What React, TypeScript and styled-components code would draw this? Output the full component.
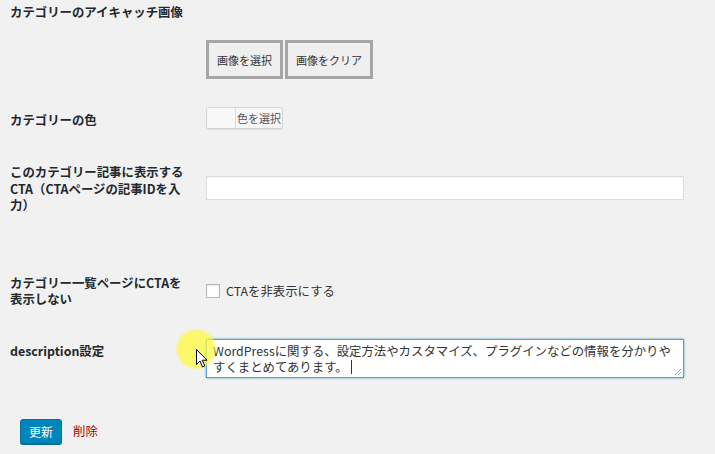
import styled, { createGlobalStyle } from 'styled-components';

const GlobalStyle = createGlobalStyle`
  html, body {
    margin: 0;
    padding: 0;
    background: #f1f1f1;
  }
  body {
    font-family: "Noto Sans CJK JP", "Noto Sans", sans-serif;
    font-size: 12.4px;
    color: #23282d;
  }
`;

const Page = styled.div`
  position: relative;
  width: 715px;
  height: 454px;
  overflow: hidden;
  padding-left: 10px;
  box-sizing: border-box;
`;

const Row = styled.div`
  display: flex;
  align-items: flex-start;
`;

const Label = styled.div<{ $top: number }>`
  width: 196px;
  flex-shrink: 0;
  padding-top: ${(p) => p.$top}px;
  font-weight: 700;
  line-height: 16.5px;
  box-sizing: border-box;
  padding-right: 14px;
`;

const Field = styled.div<{ $top: number }>`
  flex: 1;
  padding-top: ${(p) => p.$top}px;
  display: flex;
  align-items: center;
  gap: 2px;
`;

const MediaButton = styled.button`
  height: 39px;
  padding: 0 8px;
  background: #efefef;
  border: 3px solid #a6a6a6;
  font-family: inherit;
  font-size: 11px;
  color: #333;
  cursor: pointer;
`;

const ColorPicker = styled.button`
  display: flex;
  align-items: stretch;
  width: 77px;
  height: 22px;
  padding: 0;
  border: 1px solid #d4d4d4;
  border-radius: 3px;
  background: #f7f7f7;
  box-shadow: 0 1px 0 #ddd;
  font-family: inherit;
  font-size: 11px;
  color: #555;
  overflow: hidden;
`;

const Swatch = styled.span`
  width: 28px;
  background: #f8f8f8;
  border-right: 1px solid #dcdcdc;
`;

const SwatchText = styled.span`
  flex: 1;
  display: flex;
  align-items: center;
  justify-content: center;
`;

const TextInput = styled.input`
  width: 478px;
  height: 24px;
  box-sizing: border-box;
  border: 1px solid #ddd;
  background: #fff;
  box-shadow: inset 0 1px 2px rgba(0, 0, 0, 0.05);
  outline: none;
`;

const CheckLabel = styled.label`
  display: flex;
  align-items: center;
  gap: 6px;
  font-size: 12.4px;
  color: #333;
`;

const Checkbox = styled.span`
  width: 14px;
  height: 14px;
  box-sizing: border-box;
  border: 1px solid #b4b9be;
  background: #fff;
  box-shadow: inset 0 1px 2px rgba(0, 0, 0, 0.1);
`;

const TextArea = styled.div`
  position: relative;
  width: 478px;
  height: 39px;
  box-sizing: border-box;
  border: 1px solid #5b9dd9;
  box-shadow: 0 0 2px rgba(30, 140, 190, 0.8);
  background: #fff;
  padding: 3px 6px;
  line-height: 16px;
  color: #333;
  font-size: 12.4px;
`;

const Caret = styled.span`
  display: inline-block;
  width: 1px;
  height: 14px;
  margin-left: 3px;
  background: #333;
  vertical-align: -2px;
`;

const Grip = styled.svg`
  position: absolute;
  right: 1px;
  bottom: 1px;
`;

const Actions = styled.div`
  display: flex;
  align-items: center;
  gap: 11px;
  margin-top: 41px;
  padding-left: 10px;
`;

const PrimaryButton = styled.button`
  height: 25px;
  padding: 0 8px;
  background: #0085ba;
  border: 1px solid #0073aa;
  border-radius: 3px;
  box-shadow: 0 1px 0 #006799;
  color: #fff;
  font-family: inherit;
  font-size: 12px;
`;

const DeleteLink = styled.a`
  color: #a00;
  font-size: 12.4px;
  text-decoration: none;
`;

const Highlight = styled.div`
  position: absolute;
  left: 176px;
  top: 329px;
  width: 40px;
  height: 40px;
  border-radius: 50%;
  background: radial-gradient(circle, rgba(255, 250, 60, 0.75) 55%, rgba(255, 250, 60, 0.35) 80%, rgba(255, 250, 60, 0) 100%);
  pointer-events: none;
`;

const Pointer = styled.svg`
  position: absolute;
  left: 196px;
  top: 349px;
`;

export default function App() {
  return (
    <Page>
      <GlobalStyle />
      <Row>
        <Label $top={4}>カテゴリーのアイキャッチ画像</Label>
        <Field $top={40}>
          <MediaButton>画像を選択</MediaButton>
          <MediaButton>画像をクリア</MediaButton>
        </Field>
      </Row>
      <Row>
        <Label $top={33}>カテゴリーの色</Label>
        <Field $top={28}>
          <ColorPicker>
            <Swatch />
            <SwatchText>色を選択</SwatchText>
          </ColorPicker>
        </Field>
      </Row>
      <Row>
        <Label $top={35}>このカテゴリー記事に表示するCTA（CTAページの記事IDを入力）</Label>
        <Field $top={47}>
          <TextInput />
        </Field>
      </Row>
      <Row>
        <Label $top={61}>カテゴリー一覧ページにCTAを表示しない</Label>
        <Field $top={68}>
          <CheckLabel>
            <Checkbox />
            CTAを非表示にする
          </CheckLabel>
        </Field>
      </Row>
      <Row>
        <Label $top={35}>description設定</Label>
        <Field $top={31}>
          <TextArea>
            WordPressに関する、設定方法やカスタマイズ、プラグインなどの情報を分かりやすくまとめてあります。
            <Caret />
            <Grip width="9" height="9" viewBox="0 0 9 9">
              <path d="M8 2 L2 8 M8 5 L5 8" stroke="#999" strokeWidth="1" />
            </Grip>
          </TextArea>
        </Field>
      </Row>
      <Actions>
        <PrimaryButton>更新</PrimaryButton>
        <DeleteLink href="#">削除</DeleteLink>
      </Actions>
      <Highlight />
      <Pointer width="12" height="19" viewBox="0 0 12 19">
        <path d="M0.5 0.5 L0.5 15.5 L4 12 L6.5 18 L8.8 17 L6.3 11.2 L11 11.2 Z" fill="#fff" stroke="#000" strokeWidth="1" strokeLinejoin="round" />
      </Pointer>
    </Page>
  );
}
